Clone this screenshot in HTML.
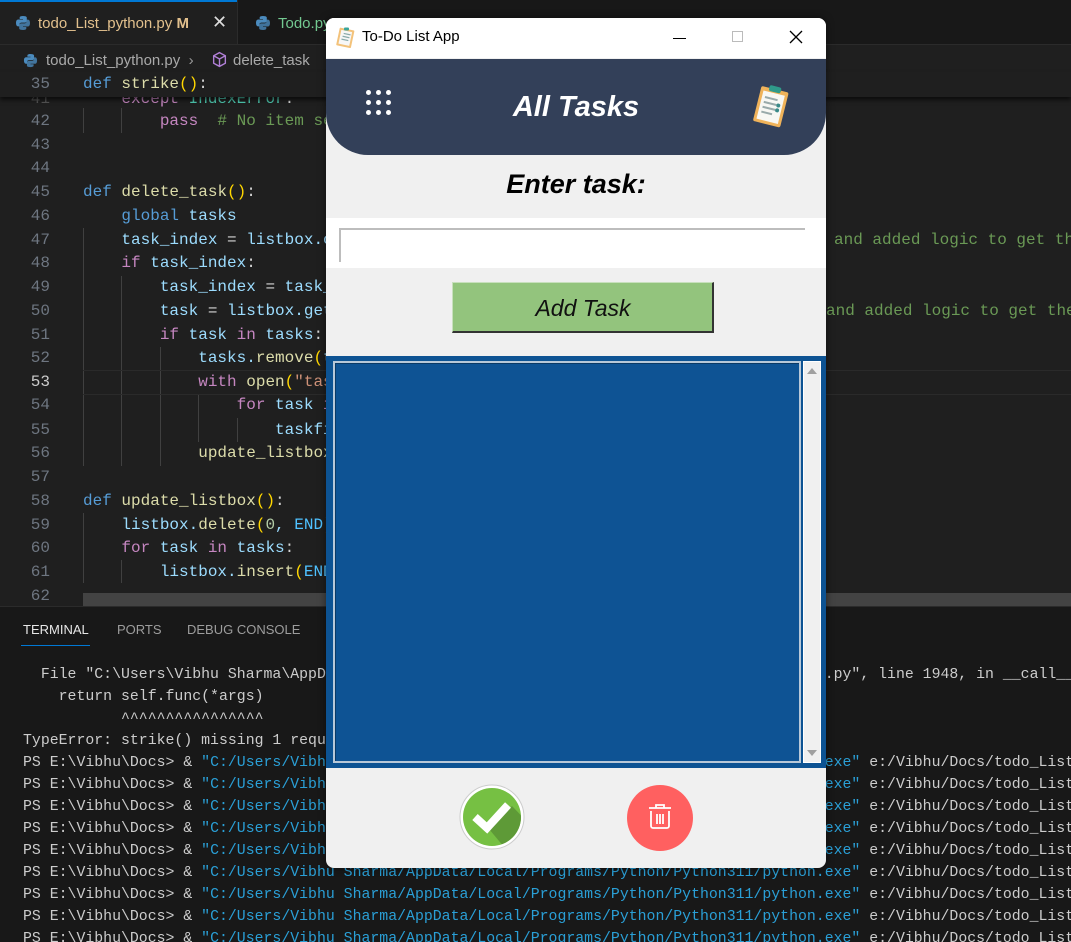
<!DOCTYPE html>
<html style="overflow:hidden"><head><meta charset="utf-8"><style>
*{margin:0;padding:0;box-sizing:border-box}
body{width:1071px;height:942px;background:#1f1f1f;position:relative;overflow:hidden;font-family:"Liberation Sans",sans-serif}
.a{position:absolute;white-space:pre}
.c{font-family:"Liberation Mono",monospace;font-size:16px;line-height:24px;color:#9cdcfe}
.ln{font-family:"Liberation Mono",monospace;font-size:16px;line-height:24px;color:#6e7681;width:50px;text-align:right;left:0}
.t{font-family:"Liberation Mono",monospace;font-size:14.85px;line-height:22px;color:#cccccc;left:23px;width:1048px;overflow:hidden}
.k{color:#569cd6}.p{color:#c586c0}.f{color:#dcdcaa}.y{color:#ffd700}.g{color:#6a9955}.s{color:#ce9178}.w{color:#d4d4d4}.b{color:#4fc1ff}.cy{color:#2a9fd6}
.guide{position:absolute;width:1px;background:#404040}
</style></head><body>
<div class="a" style="left:0;top:0;width:1071px;height:45px;background:#181818"></div>
<div class="a" style="left:0;top:0;width:237px;height:45px;background:#1f1f1f;border-top:2px solid #0078d4"></div>
<div class="a" style="left:237px;top:0;width:1px;height:45px;background:#2b2b2b"></div>
<div class="a" style="left:0;top:44px;width:1071px;height:1px;background:#2b2b2b"></div>
<svg class="a" style="left:15px;top:15px" width="16" height="16" viewBox="0 0 16 16"><path d="M7.9 1C4.5 1 4.7 2.5 4.7 2.5V4h3.3v.5H3.4S1 4.2 1 7.9s2.1 3.5 2.1 3.5h1.3V9.7s-.1-2.1 2-2.1h3.4s2 0 2-1.9V2.7S12.1 1 7.9 1z" fill="#4b8bbe"/><path d="M8.1 15c3.4 0 3.2-1.5 3.2-1.5V12H8v-.5h4.6S15 11.8 15 8.1s-2.1-3.5-2.1-3.5h-1.3v1.7s.1 2.1-2 2.1H6.2s-2 0-2 1.9v3.1S3.9 15 8.1 15z" fill="#4b8bbe" opacity=".8"/></svg>
<div class="a" style="left:38px;top:15px;font-size:15px;color:#e2c08d">todo_List_python.py <b style="font-weight:bold;color:#e2c08d">M</b></div>
<div class="a" style="left:212px;top:12px;font-size:18px;color:#ddd">✕</div>
<svg class="a" style="left:255px;top:15px" width="16" height="16" viewBox="0 0 16 16"><path d="M7.9 1C4.5 1 4.7 2.5 4.7 2.5V4h3.3v.5H3.4S1 4.2 1 7.9s2.1 3.5 2.1 3.5h1.3V9.7s-.1-2.1 2-2.1h3.4s2 0 2-1.9V2.7S12.1 1 7.9 1z" fill="#4b8bbe"/><path d="M8.1 15c3.4 0 3.2-1.5 3.2-1.5V12H8v-.5h4.6S15 11.8 15 8.1s-2.1-3.5-2.1-3.5h-1.3v1.7s.1 2.1-2 2.1H6.2s-2 0-2 1.9v3.1S3.9 15 8.1 15z" fill="#4b8bbe" opacity=".8"/></svg>
<div class="a" style="left:278px;top:15px;font-size:15px;color:#73c991">Todo.py</div>
<svg class="a" style="left:23px;top:53px" width="15" height="15" viewBox="0 0 16 16"><path d="M7.9 1C4.5 1 4.7 2.5 4.7 2.5V4h3.3v.5H3.4S1 4.2 1 7.9s2.1 3.5 2.1 3.5h1.3V9.7s-.1-2.1 2-2.1h3.4s2 0 2-1.9V2.7S12.1 1 7.9 1z" fill="#4b8bbe"/><path d="M8.1 15c3.4 0 3.2-1.5 3.2-1.5V12H8v-.5h4.6S15 11.8 15 8.1s-2.1-3.5-2.1-3.5h-1.3v1.7s.1 2.1-2 2.1H6.2s-2 0-2 1.9v3.1S3.9 15 8.1 15z" fill="#4b8bbe" opacity=".8"/></svg>
<div class="a" style="left:46px;top:52px;font-size:15px;color:#a9a9a9">todo_List_python.py  <span style="color:#999">›</span></div>
<svg class="a" style="left:211px;top:51px" width="17" height="17" viewBox="0 0 16 16"><path d="M8 1.5l5.5 3v7L8 14.5l-5.5-3v-7zM2.5 4.5L8 7.5l5.5-3M8 7.5v7" fill="none" stroke="#b180d7" stroke-width="1.3"/></svg>
<div class="a" style="left:233px;top:52px;font-size:15px;color:#a9a9a9">delete_task</div>
<div class="guide" style="left:83px;top:108px;height:25px"></div>
<div class="guide" style="left:121px;top:108px;height:25px"></div>
<div class="guide" style="left:83px;top:228px;height:238px"></div>
<div class="guide" style="left:121px;top:276px;height:190px"></div>
<div class="guide" style="left:160px;top:347px;height:119px"></div>
<div class="guide" style="left:198px;top:394px;height:48px"></div>
<div class="guide" style="left:237px;top:418px;height:24px"></div>
<div class="guide" style="left:83px;top:513px;height:70px"></div>
<div class="guide" style="left:121px;top:560px;height:23px"></div>
<div class="a" style="left:83px;top:370px;width:988px;height:25px;border-top:1px solid #2a2a2a;border-bottom:1px solid #2a2a2a"></div>

<div class="a ln" style="top:87px;color:#555">41</div>
<div class="a c" style="left:83px;top:87px">    <span class="p">except</span> <span style="color:#4ec9b0">IndexError</span><span class="w">:</span></div>
<div class="a ln" style="top:109px">42</div><div class="a c" style="left:83px;top:109px">        <span class="p">pass</span>  <span class="g"># No item selected</span></div>
<div class="a ln" style="top:133px">43</div>
<div class="a ln" style="top:156px">44</div>
<div class="a ln" style="top:180px">45</div><div class="a c" style="left:83px;top:180px"><span class="k">def</span> <span class="f">delete_task</span><span class="y">()</span><span class="w">:</span></div>
<div class="a ln" style="top:204px">46</div><div class="a c" style="left:83px;top:204px">    <span class="k">global</span> tasks</div>
<div class="a ln" style="top:228px">47</div><div class="a c" style="left:83px;top:228px">    task_index <span class="w">=</span> listbox.curselection<span class="y">()</span></div>
<div class="a c" style="left:834px;top:228px"><span class="g">and added logic to get the</span></div>
<div class="a ln" style="top:251px">48</div><div class="a c" style="left:83px;top:251px">    <span class="p">if</span> task_index<span class="w">:</span></div>
<div class="a ln" style="top:275px">49</div><div class="a c" style="left:83px;top:275px">        task_index <span class="w">=</span> task_index[0]</div>
<div class="a ln" style="top:299px">50</div><div class="a c" style="left:83px;top:299px">        task <span class="w">=</span> listbox.get<span class="y">(</span>task_index<span class="y">)</span></div>
<div class="a c" style="left:826px;top:299px"><span class="g">and added logic to get the</span></div>
<div class="a ln" style="top:323px">51</div><div class="a c" style="left:83px;top:323px">        <span class="p">if</span> task <span class="p">in</span> tasks<span class="w">:</span></div>
<div class="a ln" style="top:346px">52</div><div class="a c" style="left:83px;top:346px">            tasks.<span class="f">remove</span><span class="y">(</span>task<span class="y">)</span></div>
<div class="a ln" style="top:370px;color:#ccc">53</div><div class="a c" style="left:83px;top:370px">            <span class="p">with</span> <span class="f">open</span><span class="y">(</span><span class="s">"tasks.txt"</span></div>
<div class="a ln" style="top:393px">54</div><div class="a c" style="left:83px;top:393px">                <span class="p">for</span> task <span class="p">in</span></div>
<div class="a ln" style="top:418px">55</div><div class="a c" style="left:83px;top:418px">                    taskfile</div>
<div class="a ln" style="top:441px">56</div><div class="a c" style="left:83px;top:441px">            <span class="f">update_listbox</span></div>
<div class="a ln" style="top:465px">57</div>
<div class="a ln" style="top:489px">58</div><div class="a c" style="left:83px;top:489px"><span class="k">def</span> <span class="f">update_listbox</span><span class="y">()</span><span class="w">:</span></div>
<div class="a ln" style="top:513px">59</div><div class="a c" style="left:83px;top:513px">    listbox.<span class="f">delete</span><span class="y">(</span><span style="color:#b5cea8">0</span>, <span class="b">END</span><span class="y">)</span></div>
<div class="a ln" style="top:536px">60</div><div class="a c" style="left:83px;top:536px">    <span class="p">for</span> task <span class="p">in</span> tasks<span class="w">:</span></div>
<div class="a ln" style="top:560px">61</div><div class="a c" style="left:83px;top:560px">        listbox.<span class="f">insert</span><span class="y">(</span><span class="b">END</span>, task<span class="y">)</span></div>
<div class="a ln" style="top:584px">62</div>
<div class="a" style="left:0;top:72px;width:1071px;height:25px;background:#1f1f1f;box-shadow:0 3px 4px rgba(0,0,0,.6)"></div>
<div class="a ln" style="top:72px">35</div><div class="a c" style="left:83px;top:72px"><span class="k">def</span> <span class="f">strike</span><span class="y">()</span><span class="w">:</span></div>
<div class="a" style="left:83px;top:593px;width:988px;height:13px;background:#434343"></div>
<div class="a" style="left:0;top:606px;width:1071px;height:336px;background:#181818;border-top:1px solid #2b2b2b"></div>
<div class="a" style="left:23px;top:622px;font-size:13px;color:#e7e7e7">TERMINAL</div>
<div class="a" style="left:21px;top:645px;width:69px;height:1px;background:#0078d4"></div>
<div class="a" style="left:117px;top:622px;font-size:13px;color:#9d9d9d">PORTS</div>
<div class="a" style="left:187px;top:622px;font-size:13px;color:#9d9d9d">DEBUG CONSOLE</div>
<div class="a t" style="top:664px">  File "C:\Users\Vibhu Sharma\AppData\Local\Programs\Python\Python311\Lib\tkinter\__init__.py", line 1948, in __call__</div>
<div class="a t" style="top:686px">    return self.func(*args)</div>
<div class="a t" style="top:708px">           ^^^^^^^^^^^^^^^^</div>
<div class="a t" style="top:730px">TypeError: strike() missing 1 required positional argument: 'event'</div>
<div class="a t" style="top:752px">PS E:\Vibhu\Docs&gt; &amp; <span class="cy">"C:/Users/Vibhu Sharma/AppData/Local/Programs/Python/Python311/python.exe"</span> e:/Vibhu/Docs/todo_List_python.py</div>
<div class="a t" style="top:774px">PS E:\Vibhu\Docs&gt; &amp; <span class="cy">"C:/Users/Vibhu Sharma/AppData/Local/Programs/Python/Python311/python.exe"</span> e:/Vibhu/Docs/todo_List_python.py</div>
<div class="a t" style="top:796px">PS E:\Vibhu\Docs&gt; &amp; <span class="cy">"C:/Users/Vibhu Sharma/AppData/Local/Programs/Python/Python311/python.exe"</span> e:/Vibhu/Docs/todo_List_python.py</div>
<div class="a t" style="top:818px">PS E:\Vibhu\Docs&gt; &amp; <span class="cy">"C:/Users/Vibhu Sharma/AppData/Local/Programs/Python/Python311/python.exe"</span> e:/Vibhu/Docs/todo_List_python.py</div>
<div class="a t" style="top:840px">PS E:\Vibhu\Docs&gt; &amp; <span class="cy">"C:/Users/Vibhu Sharma/AppData/Local/Programs/Python/Python311/python.exe"</span> e:/Vibhu/Docs/todo_List_python.py</div>
<div class="a t" style="top:862px">PS E:\Vibhu\Docs&gt; &amp; <span class="cy">"C:/Users/Vibhu Sharma/AppData/Local/Programs/Python/Python311/python.exe"</span> e:/Vibhu/Docs/todo_List_python.py</div>
<div class="a t" style="top:884px">PS E:\Vibhu\Docs&gt; &amp; <span class="cy">"C:/Users/Vibhu Sharma/AppData/Local/Programs/Python/Python311/python.exe"</span> e:/Vibhu/Docs/todo_List_python.py</div>
<div class="a t" style="top:906px">PS E:\Vibhu\Docs&gt; &amp; <span class="cy">"C:/Users/Vibhu Sharma/AppData/Local/Programs/Python/Python311/python.exe"</span> e:/Vibhu/Docs/todo_List_python.py</div>
<div class="a t" style="top:928px;height:14px">PS E:\Vibhu\Docs&gt; &amp; <span class="cy">"C:/Users/Vibhu Sharma/AppData/Local/Programs/Python/Python311/python.exe"</span> e:/Vibhu/Docs/todo_List_python.py</div>

<div class="a" style="left:326px;top:18px;width:500px;height:850px;background:#f0f0f0;border-radius:8px;overflow:hidden;box-shadow:0 0 8px rgba(0,0,0,.5)">
  <div class="a" style="left:0;top:0;width:500px;height:40px;background:#fff"></div>
  <svg class="a" style="left:9px;top:8px" width="22" height="22" viewBox="0 0 22 22"><rect x="3" y="3" width="15" height="18" rx="1" transform="rotate(12 11 11)" fill="#f3c27a"/><rect x="5" y="5" width="11" height="14" transform="rotate(12 11 11)" fill="#f7f7f7"/><path d="M8 8h7M7.5 11h7M7 14h7" stroke="#8aa" stroke-width="1.2" transform="rotate(12 11 11)"/><rect x="9" y="1.5" width="5" height="3" rx="1" fill="#3aa59a"/></svg>
  <div class="a" style="left:36px;top:10px;font-size:15px;color:#000">To-Do List App</div>
  <div class="a" style="left:347px;top:20px;width:13px;height:1px;background:#000"></div>
  <div class="a" style="left:406px;top:13px;width:11px;height:11px;border:1px solid #bbb"></div>
  <svg class="a" style="left:463px;top:12px" width="14" height="14"><path d="M1 1L13 13M13 1L1 13" stroke="#000" stroke-width="1.3"/></svg>
  <div class="a" style="left:0;top:41px;width:500px;height:96px;background:#334059;border-radius:0 0 42px 42px"></div>
  <svg class="a" style="left:40px;top:72px" width="26" height="26"><g fill="#fff"><circle cx="2.5" cy="2.5" r="2.5"/><circle cx="12.5" cy="2.5" r="2.5"/><circle cx="22.5" cy="2.5" r="2.5"/><circle cx="2.5" cy="12.5" r="2.5"/><circle cx="12.5" cy="12.5" r="2.5"/><circle cx="22.5" cy="12.5" r="2.5"/><circle cx="2.5" cy="22.5" r="2.5"/><circle cx="12.5" cy="22.5" r="2.5"/><circle cx="22.5" cy="22.5" r="2.5"/></g></svg>
  <div class="a" style="left:0;top:73px;width:500px;text-align:center;font-size:29px;font-weight:bold;font-style:italic;color:#fff">All Tasks</div>
  <svg class="a" style="left:425px;top:65px" width="42" height="46" viewBox="0 0 42 46"><g transform="rotate(14 21 23)"><rect x="6" y="6" width="28" height="36" rx="2" fill="#f0b35a"/><rect x="9" y="10" width="22" height="29" fill="#f8f8f4"/><path d="M12 16h13M12 21h13M12 26h13M12 31h11" stroke="#9aa" stroke-width="2"/><circle cx="27" cy="21" r="2" fill="#3a8a88"/><circle cx="27" cy="26" r="2" fill="#3a8a88"/><rect x="14" y="3" width="12" height="6" rx="2" fill="#2f9a8a"/></g></svg>
  <div class="a" style="left:0;top:151px;width:500px;text-align:center;font-size:27px;font-weight:bold;font-style:italic;color:#000">Enter task:</div>
  <div class="a" style="left:0;top:200px;width:500px;height:50px;background:#fff"></div>
  <div class="a" style="left:13px;top:210px;width:466px;height:34px;border-top:2px solid #bdbdbd;border-left:2px solid #bdbdbd;background:#fff"></div>
  <div class="a" style="left:126px;top:264px;width:262px;height:51px;background:#93c47d;border:1px solid #c8e0bd;border-right:2px solid #333;border-bottom:2px solid #333"></div>
  <div class="a" style="left:126px;top:277px;width:262px;text-align:center;font-size:23px;font-style:italic;color:#111">Add Task</div>
  <div class="a" style="left:0;top:338px;width:500px;height:412px;background:#0d5393"></div>
  <div class="a" style="left:7px;top:343px;width:468px;height:402px;border:2px solid #b8c8d8;box-shadow:inset 1px 1px 0 #0a3a66;background:#0e5394"></div>
  <div class="a" style="left:477px;top:343px;width:18px;height:402px;background:#f0f0f0;border:1px solid #fff"></div>
  <svg class="a" style="left:480px;top:349px" width="12" height="8"><path d="M1 7L6 1L11 7Z" fill="#a0a0a0"/></svg>
  <svg class="a" style="left:480px;top:731px" width="12" height="8"><path d="M1 1L6 7L11 1Z" fill="#a0a0a0"/></svg>
  <svg class="a" style="left:133px;top:766px" width="66" height="66" viewBox="0 0 66 66"><defs><clipPath id="cc"><circle cx="33" cy="33" r="29"/></clipPath></defs><circle cx="33" cy="33" r="32" fill="#fff" stroke="#ccc"/><circle cx="33" cy="33" r="29" fill="#76c043"/><path d="M30 45L53 22L80 50L55 75Z" fill="#5e9a37" clip-path="url(#cc)"/><path d="M16 33L28 44L49 21" fill="none" stroke="#fff" stroke-width="8" stroke-linejoin="miter"/></svg>
  <svg class="a" style="left:301px;top:767px" width="66" height="66" viewBox="0 0 66 66"><circle cx="33" cy="33" r="33" fill="#ff6060"/><g fill="none" stroke="#fff" stroke-width="1.8"><path d="M22 23h22M29 23v-3h8v3"/><path d="M24 26v15a2 2 0 0 0 2 2h14a2 2 0 0 0 2-2V26"/><path d="M30 29v10M33 29v10M36 29v10"/></g></svg>
</div>
</body></html>
